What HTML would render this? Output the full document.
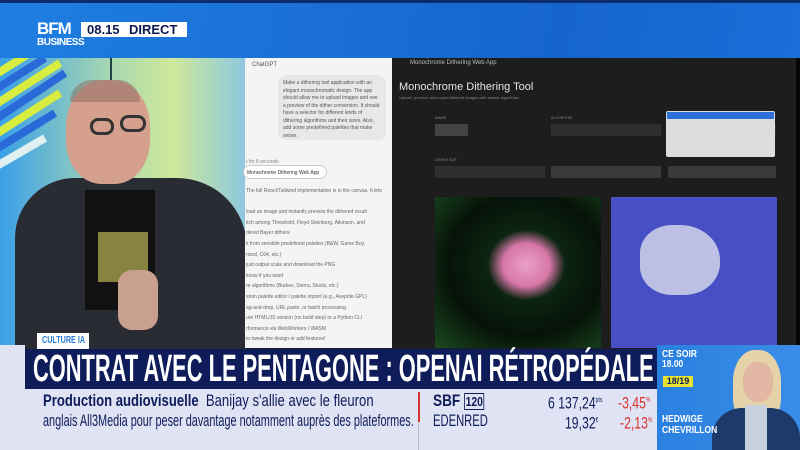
<!DOCTYPE html>
<html><head><meta charset="utf-8"><style>
*{margin:0;padding:0;box-sizing:border-box}
body{width:800px;height:450px;overflow:hidden;position:relative;font-family:"Liberation Sans",sans-serif;background:#1c1c1c}
.a{position:absolute}
.cond{display:inline-block;transform-origin:0 0;white-space:nowrap}
</style></head><body>
<div class="a" style="left:0;top:0;width:800px;height:58px;background:linear-gradient(100deg,#1e7fe0 0%,#1a6fd6 40%,#1565cc 70%,#1a6ed8 100%)"></div>
<div class="a" style="left:0;top:0;width:800px;height:3px;background:#0c2c6a"></div>
<div class="a" style="left:37px;top:21px;color:#fff;font-weight:bold;font-size:17px;line-height:15px;letter-spacing:-1px">BFM</div>
<div class="a" style="left:37px;top:37px;color:#fff;font-weight:bold;font-size:10px;letter-spacing:-0.5px">BUSINESS</div>
<div class="a" style="left:81px;top:22px;width:106px;height:15px;background:#fff"></div>
<div class="a" style="left:87px;top:22px;color:#0d1a4f;font-weight:bold;font-size:13px;line-height:15px">08.15</div>
<div class="a" style="left:129px;top:22px;color:#0d1a4f;font-weight:bold;font-size:13px;line-height:15px">DIRECT</div>
<div class="a" style="left:0;top:58px;width:246px;height:290px;background:linear-gradient(90deg,#3aa0e8 0%,#a8d8b0 45%,#cfe89a 70%,#8cc8e0 100%)"></div>
<svg class="a" style="left:0;top:58px" width="70" height="130"><g stroke-width="8"><line x1="-10" y1="20" x2="30" y2="-5" stroke="#d9ec40"/><line x1="-10" y1="35" x2="45" y2="0" stroke="#2a6ad8"/><line x1="-10" y1="50" x2="60" y2="5" stroke="#d9ec40"/><line x1="-10" y1="65" x2="65" y2="15" stroke="#2a6ad8"/><line x1="-10" y1="80" x2="60" y2="35" stroke="#d9ec40"/><line x1="-10" y1="95" x2="55" y2="55" stroke="#2a6ad8"/><line x1="-10" y1="112" x2="45" y2="80" stroke="#e0f0f0"/></g></svg>
<div class="a" style="left:110px;top:58px;width:2px;height:150px;background:#244"></div>
<div class="a" style="left:15px;top:178px;width:232px;height:175px;background:#2a2c34;border-radius:60px 70px 0 0"></div>
<div class="a" style="left:85px;top:190px;width:70px;height:120px;background:#111"></div>
<div class="a" style="left:98px;top:232px;width:50px;height:50px;background:#d8d060;opacity:.6"></div>
<div class="a" style="left:118px;top:270px;width:40px;height:60px;background:#c9a08e;border-radius:14px"></div>
<div class="a" style="left:66px;top:80px;width:84px;height:104px;background:#d6a08e;border-radius:45% 45% 42% 42%"></div>
<div class="a" style="left:70px;top:80px;width:70px;height:22px;background:#8a6a60;border-radius:40px 40px 0 0;opacity:.5"></div>
<div class="a" style="left:90px;top:118px;width:24px;height:17px;border:3px solid #333;border-radius:8px"></div>
<div class="a" style="left:120px;top:115px;width:26px;height:17px;border:3px solid #333;border-radius:8px"></div>
<div class="a" style="left:245px;top:58px;width:147px;height:290px;background:#f4f4f4"></div>
<div class="a" style="left:252px;top:62px;font-size:6px;color:#555">ChatGPT</div>
<div class="a" style="left:278px;top:75px;width:108px;height:65px;background:#e8e8e8;border-radius:8px;padding:5px;font-size:5px;color:#555;line-height:7.5px">Make a dithering tool application with an elegant monochromatic design. The app should allow me to upload images and see a preview of the dither conversion. It should have a selector for different kinds of dithering algorithms and their sizes. Also, add some predefined palettes that make sense.</div>
<div class="a" style="left:246px;top:159px;font-size:5px;color:#888">t for 8 seconds</div>
<div class="a" style="left:243px;top:165px;width:84px;height:14px;border:1px solid #ccc;border-radius:7px;background:#fff;font-size:5px;color:#333;padding:4px 3px">Monochrome Dithering Web App</div>
<div class="a" style="left:246px;top:186px;font-size:5px;color:#666;line-height:10.6px;white-space:nowrap">The full React/Tailwind implementation is in the canvas. It lets<br><br>load an image and instantly preview the dithered result<br>itch among Threshold, Floyd-Steinberg, Atkinson, and<br>dered Bayer dithers<br>k from sensible predefined palettes (B&amp;W, Game Boy,<br>rized, C64, etc.)<br>just output scale and download the PNG<br>know if you want<br>re algorithms (Burkes, Sierra, Stucki, etc.)<br>stom palette editor / palette import (e.g., Aseprite GPL)<br>ag-and-drop, URL paste, or batch processing<br>ure HTML/JS version (no build step) or a Python CLI<br>rformance via WebWorkers / WASM<br>to tweak the design or add features!</div>
<div class="a" style="left:392px;top:58px;width:404px;height:290px;background:#1d1d1d"></div>
<div class="a" style="left:796px;top:58px;width:4px;height:290px;background:#050505"></div>
<div class="a" style="left:410px;top:60px;font-size:6px;color:#bbb">Monochrome Dithering Web App</div>
<div class="a" style="left:399px;top:81px;font-size:11px;color:#e6e6e6">Monochrome Dithering Tool</div>
<div class="a" style="left:399px;top:95px;font-size:4px;color:#888">Upload, preview, and export dithered images with classic algorithms</div>
<div class="a" style="left:435px;top:116px;font-size:3.5px;color:#888">IMAGE</div>
<div class="a" style="left:551px;top:116px;font-size:3.5px;color:#888">ALGORITHM</div>
<div class="a" style="left:435px;top:124px;width:33px;height:12px;background:#444"></div>
<div class="a" style="left:551px;top:124px;width:110px;height:12px;background:#2e2e2e"></div>
<div class="a" style="left:668px;top:124px;width:108px;height:12px;background:#2e2e2e"></div>
<div class="a" style="left:435px;top:158px;font-size:3.5px;color:#888">DITHER SIZE</div>
<div class="a" style="left:435px;top:166px;width:110px;height:12px;background:#2e2e2e"></div>
<div class="a" style="left:551px;top:166px;width:110px;height:12px;background:#3a3a3a"></div>
<div class="a" style="left:668px;top:166px;width:108px;height:12px;background:#3a3a3a"></div>
<div class="a" style="left:666px;top:111px;width:109px;height:46px;background:#ddd;border-radius:2px"></div>
<div class="a" style="left:667px;top:112px;width:107px;height:7px;background:#2d6fd6"></div>
<div class="a" style="left:435px;top:197px;width:166px;height:151px;background:radial-gradient(ellipse at 55% 45%,#e8a0c8 0%,#d877a8 18%,#0c2412 30%,#061208 60%,#1a4a20 100%)"></div>
<div class="a" style="left:611px;top:197px;width:166px;height:151px;background:#4650c4"></div>
<div class="a" style="left:640px;top:225px;width:80px;height:70px;background:#c8cce8;border-radius:40% 50% 45% 40%;opacity:.9"></div>
<div class="a" style="left:37px;top:333px;width:52px;height:16px;background:#fff;color:#2a7ad8;font-weight:bold;font-size:10px;line-height:16px;padding-left:5px;overflow:hidden"><span class="cond" style="transform:scaleX(0.72)">CULTURE IA</span></div>
<div class="a" style="left:25px;top:349px;width:632px;height:40px;background:#0e1c5a"></div>
<div class="a" style="left:33px;top:350px;color:#fff;font-weight:bold;font-size:38px;line-height:38px"><span class="cond" style="transform:scaleX(0.575)">CONTRAT AVEC LE PENTAGONE : OPENAI RÉTROPÉDALE</span></div>
<div class="a" style="left:0;top:389px;width:657px;height:61px;background:#dfe3f4"></div>
<div class="a" style="left:0;top:345px;width:25px;height:44px;background:#dfe3f4"></div>
<div class="a" style="left:418px;top:392px;width:2px;height:30px;background:#d8342c"></div>
<div class="a" style="left:418px;top:422px;width:1px;height:28px;background:#bbb"></div>
<div class="a" style="left:43px;top:391px;font-size:17px;line-height:20px;color:#0e1c5a;white-space:nowrap"><span class="cond" style="transform:scaleX(0.77)"><b>Production audiovisuelle</b>&nbsp; Banijay s'allie avec le fleuron</span></div>
<div class="a" style="left:43px;top:411px;font-size:17px;line-height:20px;color:#0e1c5a;white-space:nowrap"><span class="cond" style="transform:scaleX(0.64)">anglais All3Media pour peser davantage notamment auprès des plateformes.</span></div>
<div class="a" style="left:433px;top:391px;font-size:17px;line-height:20px;color:#0e1c5a;font-weight:bold"><span class="cond" style="transform:scaleX(0.8)">SBF <span style="border:1.5px solid #0e1c5a;font-size:13px;padding:0 1px">120</span></span></div>
<div class="a" style="left:548px;top:391px;font-size:17px;line-height:20px;color:#0e1c5a"><span class="cond" style="transform:scaleX(0.72)">6 137,24<sup style="font-size:7px">pts</sup></span></div>
<div class="a" style="left:618px;top:391px;font-size:17px;line-height:20px;color:#d8342c"><span class="cond" style="transform:scaleX(0.72)">-3,45<sup style="font-size:7px">%</sup></span></div>
<div class="a" style="left:433px;top:411px;font-size:17px;line-height:20px;color:#0e1c5a"><span class="cond" style="transform:scaleX(0.66)">EDENRED</span></div>
<div class="a" style="left:565px;top:411px;font-size:17px;line-height:20px;color:#0e1c5a"><span class="cond" style="transform:scaleX(0.72)">19,32<sup style="font-size:7px">€</sup></span></div>
<div class="a" style="left:620px;top:411px;font-size:17px;line-height:20px;color:#d8342c"><span class="cond" style="transform:scaleX(0.72)">-2,13<sup style="font-size:7px">%</sup></span></div>
<div class="a" style="left:657px;top:345px;width:143px;height:105px;background:linear-gradient(90deg,#2a80e0,#3a8ee8)"></div>
<div class="a" style="left:733px;top:350px;width:48px;height:70px;background:#e6d2a8;border-radius:45% 45% 30% 30%"></div>
<div class="a" style="left:743px;top:362px;width:30px;height:40px;background:#e2b8a4;border-radius:45%"></div>
<div class="a" style="left:712px;top:408px;width:88px;height:42px;background:#1e3a6a;border-radius:30px 30px 0 0"></div>
<div class="a" style="left:745px;top:405px;width:22px;height:45px;background:#c8d0dc"></div>
<div class="a" style="left:662px;top:350px;color:#fff;font-weight:bold;font-size:10px;line-height:10px"><span class="cond" style="transform:scaleX(0.85)">CE SOIR<br>18.00</span></div>
<div class="a" style="left:663px;top:376px;width:30px;height:11px;background:#e4e430;color:#0e1c5a;font-size:9px;line-height:11px;text-align:center;font-weight:bold">18/19</div>
<div class="a" style="left:662px;top:414px;color:#fff;font-weight:bold;font-size:10px;line-height:11px"><span class="cond" style="transform:scaleX(0.85)">HEDWIGE<br>CHEVRILLON</span></div>
</body></html>
